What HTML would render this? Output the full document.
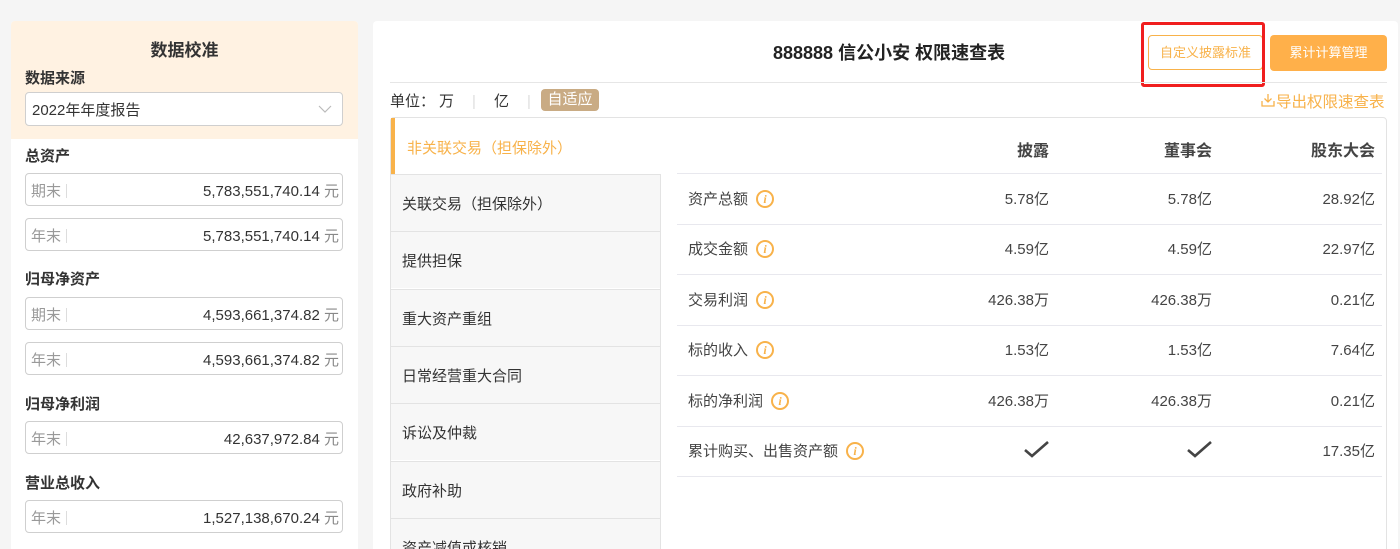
<!DOCTYPE html>
<html><head><meta charset="utf-8"><style>
*{margin:0;padding:0;box-sizing:border-box}
html{width:1400px;height:549px;overflow:hidden}
body{width:1400px;height:549px;overflow:hidden;background:#f5f5f5;font-family:"Liberation Sans","Noto Sans CJK SC",sans-serif;color:#333;position:relative}
.a{position:absolute;white-space:nowrap}
.lbl{font-size:15px;font-weight:bold;color:#333}
.inp{position:absolute;left:25px;width:318px;height:33px;border:1px solid #cfcfcf;border-radius:4px;background:#fff}
.inp .k{position:absolute;left:5px;top:6px;font-size:15px;color:#999}
.inp .k:after{content:"";position:absolute;left:35px;top:4px;height:14px;border-left:1px solid #ddd}
.inp .v{position:absolute;right:3px;top:6px;font-size:15px;color:#333}
.inp .v span{color:#888}
.tab{position:absolute;left:391px;width:269px;height:57px;background:#f7f7f7;border-top:1px solid #e3e3e3;font-size:15px;color:#333;padding:18px 0 0 11px}
.row{position:absolute;left:677px;width:705px;height:51px;border-bottom:1px solid #e8e8ee;font-size:15px;color:#444}
.row .n{position:absolute;left:11px;top:14px;display:flex;align-items:center}
.i{display:inline-block;width:18px;height:18px;border:2px solid #f8b24a;border-radius:50%;color:#f8b24a;font-size:12px;font-weight:bold;font-style:italic;text-align:center;line-height:14px;margin-left:8px;font-family:"Liberation Serif",serif}
.c1,.c2,.c3{position:absolute;top:14px}
.c1{right:333px}.c2{right:170px}.c3{right:7px}
.chk{position:absolute;top:14px;width:26px;height:18px}
</style></head><body>
<div class="a" style="left:11px;top:21px;width:347px;height:528px;background:#fff;border-radius:4px 4px 0 0"></div>
<div class="a" style="left:11px;top:21px;width:347px;height:118px;background:#fff2e2;border-radius:4px 4px 0 0"></div>
<div class="a" style="left:11px;top:36px;width:347px;text-align:center;font-size:17px;font-weight:bold">数据校准</div>
<div class="a lbl" style="left:25px;top:67px">数据来源</div>
<div class="inp" style="top:92px;height:34px"><div class="a" style="left:6px;top:6px;font-size:15px;color:#333">2022年年度报告</div>
<svg class="a" style="right:10px;top:12px" width="14" height="9"><path d="M1 1L7 7L13 1" fill="none" stroke="#bbb" stroke-width="1.2"/></svg></div>
<div class="a lbl" style="left:25px;top:145px">总资产</div>
<div class="inp" style="top:173px"><div class="k">期末</div><div class="v">5,783,551,740.14 <span>元</span></div></div>
<div class="inp" style="top:218px"><div class="k">年末</div><div class="v">5,783,551,740.14 <span>元</span></div></div>
<div class="a lbl" style="left:25px;top:268px">归母净资产</div>
<div class="inp" style="top:297px"><div class="k">期末</div><div class="v">4,593,661,374.82 <span>元</span></div></div>
<div class="inp" style="top:342px"><div class="k">年末</div><div class="v">4,593,661,374.82 <span>元</span></div></div>
<div class="a lbl" style="left:25px;top:393px">归母净利润</div>
<div class="inp" style="top:421px"><div class="k">年末</div><div class="v">42,637,972.84 <span>元</span></div></div>
<div class="a lbl" style="left:25px;top:472px">营业总收入</div>
<div class="inp" style="top:500px"><div class="k">年末</div><div class="v">1,527,138,670.24 <span>元</span></div></div>

<div class="a" style="left:373px;top:21px;width:1025px;height:528px;background:#fff;border-radius:4px 4px 0 0"></div>
<div class="a" style="left:773px;top:39px;font-size:18px;font-weight:bold;color:#222">888888 信公小安 权限速查表</div>
<div class="a" style="left:1148px;top:35px;width:115px;height:35px;border:1px solid #f8b24a;border-radius:4px;color:#f8b24a;font-size:13px;text-align:center;line-height:33px">自定义披露标准</div>
<div class="a" style="left:1141px;top:22px;width:124px;height:65px;border:3px solid #f01e1e;border-radius:3px"></div>
<div class="a" style="left:1270px;top:35px;width:117px;height:36px;background:#ffb04a;border-radius:4px;color:#fff;font-size:13px;text-align:center;line-height:36px">累计计算管理</div>
<div class="a" style="left:390px;top:82px;width:997px;height:1px;background:#e6e6e6"></div>
<div class="a" style="left:390px;top:90px;font-size:15px;color:#333">单位：<span style="margin-left:4px">万</span><span style="color:#ddd;margin:0 18px">|</span>亿<span style="color:#ddd;margin:0 18px">|</span></div>
<div class="a" style="left:541px;top:89px;width:58px;height:22px;background:#c9ab84;border-radius:4px;color:#fff;font-size:15px;text-align:center;line-height:22px">自适应</div>
<svg class="a" style="left:1261px;top:93px" width="14" height="14"><path d="M7 1V9M3.5 5.5L7 9L10.5 5.5M1 8V13H13V8" fill="none" stroke="#f8b24a" stroke-width="1.3"/></svg>
<div class="a" style="left:1276px;top:90px;font-size:15.5px;color:#f8b24a">导出权限速查表</div>
<div class="a" style="left:390px;top:117px;width:997px;height:440px;border:1px solid #e3e3e3;border-radius:4px"></div>
<div class="a" style="left:391px;top:118px;width:4px;height:56px;background:#f8b24a"></div>
<div class="a" style="left:407px;top:137px;font-size:15px;color:#f8b24a">非关联交易（担保除外）</div>
<div class="a" style="left:660px;top:174px;width:1px;height:380px;background:#e3e3e3"></div>
<div class="tab" style="top:174px">关联交易（担保除外）</div>
<div class="tab" style="top:231px">提供担保</div>
<div class="tab" style="top:289px">重大资产重组</div>
<div class="tab" style="top:346px">日常经营重大合同</div>
<div class="tab" style="top:403px">诉讼及仲裁</div>
<div class="tab" style="top:461px">政府补助</div>
<div class="tab" style="top:518px;height:40px">资产减值或核销</div>
<div class="a" style="right:351px;top:137px;font-size:16px;font-weight:bold;color:#444">披露</div>
<div class="a" style="right:188px;top:137px;font-size:16px;font-weight:bold;color:#444">董事会</div>
<div class="a" style="right:25px;top:137px;font-size:16px;font-weight:bold;color:#444">股东大会</div>
<div class="a" style="left:677px;top:173px;width:705px;height:1px;background:#e8e8ee"></div>
<div class="row" style="top:174px"><div class="n">资产总额<span class="i">i</span></div><div class="c1">5.78亿</div><div class="c2">5.78亿</div><div class="c3">28.92亿</div></div>
<div class="row" style="top:224px"><div class="n">成交金额<span class="i">i</span></div><div class="c1">4.59亿</div><div class="c2">4.59亿</div><div class="c3">22.97亿</div></div>
<div class="row" style="top:275px"><div class="n">交易利润<span class="i">i</span></div><div class="c1">426.38万</div><div class="c2">426.38万</div><div class="c3">0.21亿</div></div>
<div class="row" style="top:325px"><div class="n">标的收入<span class="i">i</span></div><div class="c1">1.53亿</div><div class="c2">1.53亿</div><div class="c3">7.64亿</div></div>
<div class="row" style="top:376px"><div class="n">标的净利润<span class="i">i</span></div><div class="c1">426.38万</div><div class="c2">426.38万</div><div class="c3">0.21亿</div></div>
<div class="row" style="top:426px"><div class="n">累计购买、出售资产额<span class="i">i</span></div>
<svg class="chk" style="left:347px" viewBox="0 0 26 18"><path d="M1 10L8 16L24 2" fill="none" stroke="#444" stroke-width="2.6"/></svg>
<svg class="chk" style="left:510px" viewBox="0 0 26 18"><path d="M1 10L8 16L24 2" fill="none" stroke="#444" stroke-width="2.6"/></svg>
<div class="c3">17.35亿</div></div>
</body></html>
